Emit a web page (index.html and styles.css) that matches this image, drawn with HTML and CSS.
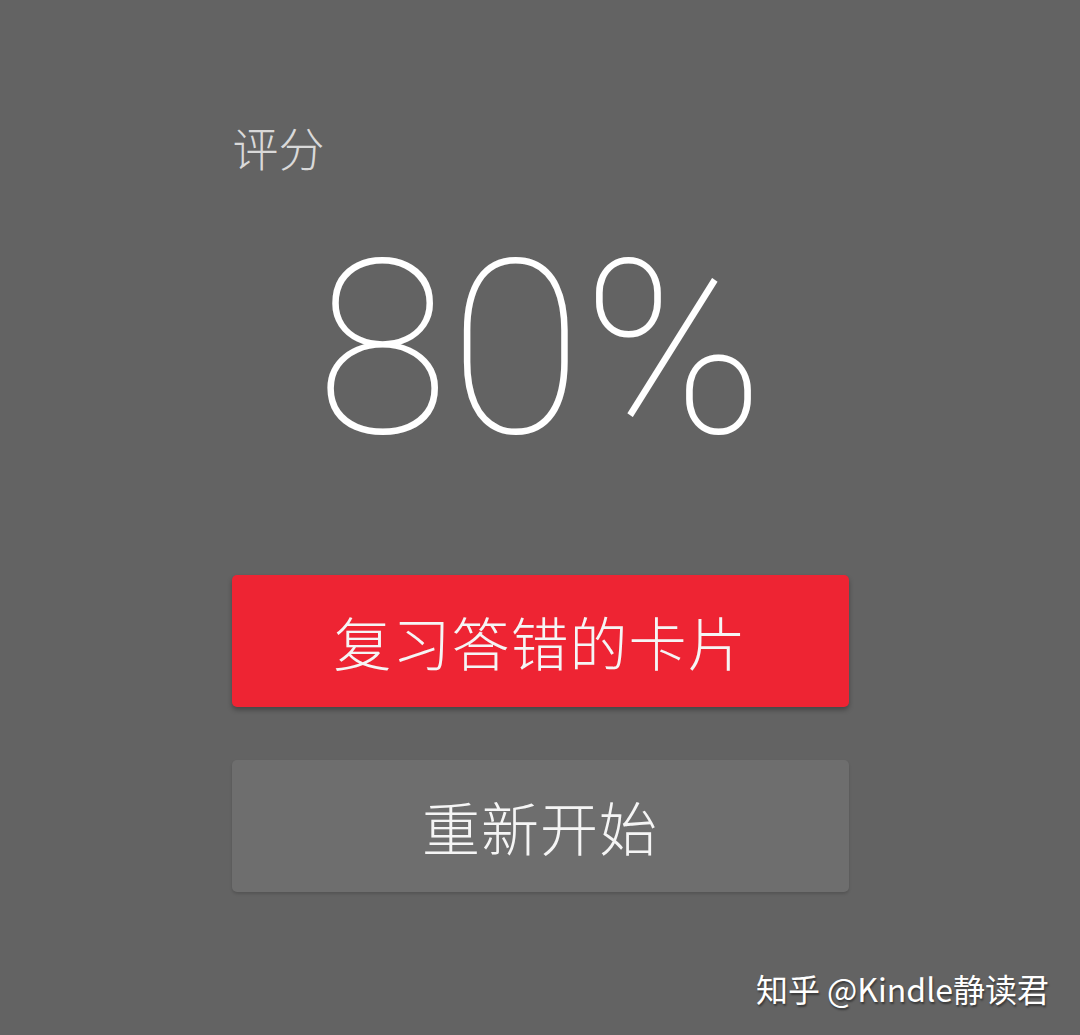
FILE: index.html
```html
<!DOCTYPE html>
<html lang="zh-CN">
<head>
<meta charset="utf-8">
<title>评分</title>
<link rel="stylesheet" href="styles.css">
</head>
<body>
<main class="screen">
  <section class="panel">
    <div class="label">评分</div>
    <div class="score">80%</div>
    <div class="actions">
      <button class="btn btn-primary">复习答错的卡片</button>
      <button class="btn btn-secondary">重新开始</button>
    </div>
  </section>
  <div class="watermark">知乎 @Kindle静读君</div>
</main>
</body>
</html>
```

FILE: styles.css
```css
html, body {
  margin: 0;
  padding: 0;
  background: #636363;
}
.screen {
  width: 1080px;
  height: 1035px;
  display: flex;
  flex-direction: column;
  align-items: center;
  font-family: "Noto Sans CJK SC", "Noto Sans", sans-serif;
}
.panel {
  width: 617px;
  padding-top: 114px;
  display: flex;
  flex-direction: column;
}
.label {
  font-size: 46px;
  line-height: 64px;
  font-weight: 300;
  color: #d9d9d9;
  padding-left: 1px;
}
.score {
  font-family: Roboto, "Noto Sans", sans-serif;
  font-weight: 100;
  font-size: 244px;
  line-height: 260px;
  color: #ffffff;
  text-align: center;
  margin-top: 42px;
}
.actions {
  margin-top: 95px;
  display: flex;
  flex-direction: column;
  gap: 53px;
}
.btn {
  height: 132px;
  border: none;
  border-radius: 5px;
  font-family: "Noto Sans CJK SC", sans-serif;
  font-size: 58px;
  font-weight: 300;
  color: #f5f5f5;
  padding: 0;
  letter-spacing: 1px;
}
.btn-primary {
  background: #ee2433;
  box-shadow: 0 3px 5px rgba(0, 0, 0, 0.3);
}
.btn-secondary {
  background: #6e6e6e;
  box-shadow: 0 2px 3px rgba(0, 0, 0, 0.15);
}
.watermark {
  margin-top: auto;
  margin-bottom: 24px;
  align-self: flex-end;
  margin-right: 31px;
  font-size: 32px;
  color: #ffffff;
  text-shadow: 1px 2px 2px rgba(0, 0, 0, 0.45);
}
```
